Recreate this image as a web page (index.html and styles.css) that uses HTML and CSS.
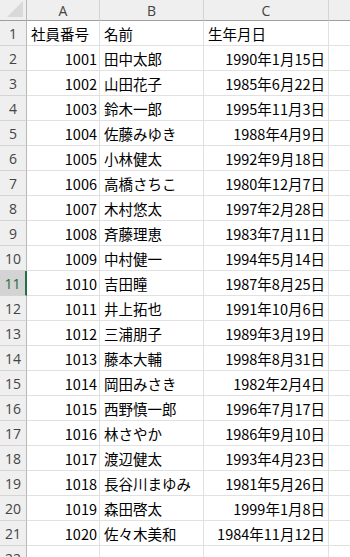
FILE: index.html
```html
<!DOCTYPE html>
<html lang="ja">
<head>
<meta charset="utf-8">
<link rel="stylesheet" href="styles.css">
</head>
<body>
<div class="sheet">
  <div class="hd corner"><svg class="tri" width="17" height="16" viewBox="0 0 17 16"><polygon points="16,0 16,16 0,16" fill="#d9d9d9"/></svg></div>
  <div class="hd col">A</div>
  <div class="hd col">B</div>
  <div class="hd col">C</div>
  <div class="hd col last"></div>

  <div class="rh">1</div><div class="c">社員番号</div><div class="c">名前</div><div class="c">生年月日</div><div class="c e"></div>
  <div class="rh">2</div><div class="c n">1001</div><div class="c">田中太郎</div><div class="c n d">1990年1月15日</div><div class="c e"></div>
  <div class="rh">3</div><div class="c n">1002</div><div class="c">山田花子</div><div class="c n d">1985年6月22日</div><div class="c e"></div>
  <div class="rh">4</div><div class="c n">1003</div><div class="c">鈴木一郎</div><div class="c n d">1995年11月3日</div><div class="c e"></div>
  <div class="rh">5</div><div class="c n">1004</div><div class="c">佐藤みゆき</div><div class="c n d">1988年4月9日</div><div class="c e"></div>
  <div class="rh">6</div><div class="c n">1005</div><div class="c">小林健太</div><div class="c n d">1992年9月18日</div><div class="c e"></div>
  <div class="rh">7</div><div class="c n">1006</div><div class="c">高橋さちこ</div><div class="c n d">1980年12月7日</div><div class="c e"></div>
  <div class="rh">8</div><div class="c n">1007</div><div class="c">木村悠太</div><div class="c n d">1997年2月28日</div><div class="c e"></div>
  <div class="rh">9</div><div class="c n">1008</div><div class="c">斉藤理恵</div><div class="c n d">1983年7月11日</div><div class="c e"></div>
  <div class="rh">10</div><div class="c n">1009</div><div class="c">中村健一</div><div class="c n d">1994年5月14日</div><div class="c e"></div>
  <div class="rh sel">11</div><div class="c n">1010</div><div class="c">吉田瞳</div><div class="c n d">1987年8月25日</div><div class="c e"></div>
  <div class="rh">12</div><div class="c n">1011</div><div class="c">井上拓也</div><div class="c n d">1991年10月6日</div><div class="c e"></div>
  <div class="rh">13</div><div class="c n">1012</div><div class="c">三浦朋子</div><div class="c n d">1989年3月19日</div><div class="c e"></div>
  <div class="rh">14</div><div class="c n">1013</div><div class="c">藤本大輔</div><div class="c n d">1998年8月31日</div><div class="c e"></div>
  <div class="rh">15</div><div class="c n">1014</div><div class="c">岡田みさき</div><div class="c n d">1982年2月4日</div><div class="c e"></div>
  <div class="rh">16</div><div class="c n">1015</div><div class="c">西野慎一郎</div><div class="c n d">1996年7月17日</div><div class="c e"></div>
  <div class="rh">17</div><div class="c n">1016</div><div class="c">林さやか</div><div class="c n d">1986年9月10日</div><div class="c e"></div>
  <div class="rh">18</div><div class="c n">1017</div><div class="c">渡辺健太</div><div class="c n d">1993年4月23日</div><div class="c e"></div>
  <div class="rh">19</div><div class="c n">1018</div><div class="c">長谷川まゆみ</div><div class="c n d">1981年5月26日</div><div class="c e"></div>
  <div class="rh">20</div><div class="c n">1019</div><div class="c">森田啓太</div><div class="c n d">1999年1月8日</div><div class="c e"></div>
  <div class="rh">21</div><div class="c n">1020</div><div class="c">佐々木美和</div><div class="c n d">1984年11月12日</div><div class="c e"></div>
  <div class="rh">22</div><div class="c"></div><div class="c"></div><div class="c"></div><div class="c e"></div>
</div>
</body>
</html>
```
FILE: styles.css
```css
html, body {
  margin: 0;
  padding: 0;
  background: #fff;
  overflow: hidden;
}
.sheet {
  display: grid;
  grid-template-columns: 27px 73px 104px 125px 1fr;
  grid-template-rows: 21px;
  grid-auto-rows: 25px;
  width: 350px;
  font-family: "Noto Sans CJK JP", sans-serif;
  font-size: 14.5px;
  color: #000;
}
.hd {
  background: #efefef;
  border-right: 1px solid #d4d4d4;
  border-bottom: 1px solid #9e9e9e;
  box-sizing: border-box;
  display: flex;
  align-items: center;
  justify-content: center;
  font-family: "Open Sans", "Noto Sans", sans-serif;
  font-size: 14px;
  color: #444;
}
.corner {
  border-right-color: #b8b8b8;
  justify-content: flex-end;
  align-items: flex-end;
  padding: 0 2px 3px 0;
}
.tri { display: block; }
.last { border-right: none; }
.rh {
  background: #efefef;
  border-right: 1px solid #b8b8b8;
  border-bottom: 1px solid #d4d4d4;
  box-sizing: border-box;
  display: flex;
  align-items: center;
  justify-content: center;
  font-family: "Open Sans", "Noto Sans", sans-serif;
  font-size: 14px;
  color: #444;
}
.rh.sel {
  background: #d3d3d3;
  color: #1d6b40;
  border-right: 2px solid #217346;
}
.c {
  border-right: 1px solid #e1e1e1;
  border-bottom: 1px solid #e1e1e1;
  box-sizing: border-box;
  display: flex;
  align-items: center;
  padding: 1px 4px 0 4px;
  white-space: nowrap;
  overflow: hidden;
}
.c.n {
  justify-content: flex-end;
  padding-right: 2px;
}
.c.d { padding-right: 3px; }
.c.e { border-right: none; }
```
